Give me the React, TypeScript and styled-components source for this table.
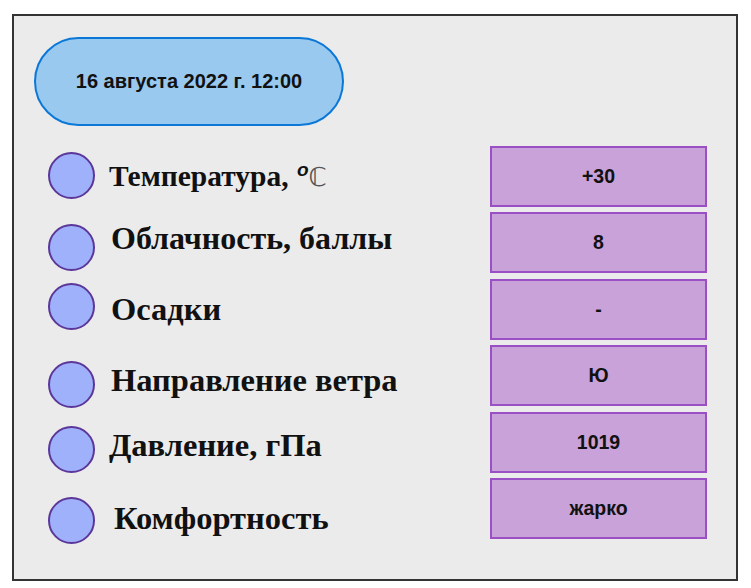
import React from 'react'
import styled, { createGlobalStyle } from 'styled-components'

const GlobalStyle = createGlobalStyle`
    html, body {
        margin: 0;
        padding: 0;
        background: #ffffff;
    }
`

const Page = styled.div`
    width: 751px;
    height: 588px;
    padding: 14px 0 0 12px;
    box-sizing: border-box;
`

const Frame = styled.main`
    width: 726px;
    height: 567px;
    box-sizing: border-box;
    border: 2px solid #333333;
    background-color: #ebebeb;
    padding: 21px 0 0 20px;
    display: flex;
    flex-direction: column;
`

const DatePill = styled.div`
    width: 310px;
    height: 89px;
    box-sizing: border-box;
    border: 2px solid #0b78d8;
    border-radius: 45px;
    background-color: #99c9ef;
    display: flex;
    align-items: center;
    justify-content: center;
    font-family: 'Liberation Sans', Arial, sans-serif;
    font-weight: bold;
    font-size: 20px;
    color: #111111;
`

const Columns = styled.div`
    display: flex;
    justify-content: space-between;
    padding-right: 29px;
`

const LabelList = styled.div`
    display: flex;
    flex-direction: column;
    padding-left: 14px;
`

const Row = styled.div<{ $top: number }>`
    display: flex;
    align-items: center;
    margin-top: ${(p) => p.$top}px;
    height: 47px;
`

const Dot = styled.div`
    width: 47px;
    height: 47px;
    box-sizing: border-box;
    border-radius: 50%;
    border: 2px solid #5b3799;
    background-color: #a0b1fb;
    flex-shrink: 0;
`

const Label = styled.span<{ $indent: number; $shift: number; $size: number }>`
    margin-left: ${(p) => p.$indent}px;
    position: relative;
    top: ${(p) => p.$shift}px;
    font-family: 'Liberation Serif', 'Times New Roman', serif;
    font-weight: bold;
    font-size: ${(p) => p.$size}px;
    color: #111111;
    white-space: nowrap;
`

const Degree = styled.span`
    font-family: 'Liberation Sans', Arial, sans-serif;
    font-style: italic;
    font-size: 19px;
    vertical-align: 10px;
    margin-left: 1px;
`

const Celsius = styled.span`
    font-family: 'DejaVu Sans', sans-serif;
    font-weight: normal;
    font-size: 26px;
    color: #555555;
`

const ValueList = styled.div`
    display: flex;
    flex-direction: column;
    gap: 5.4px;
    padding-top: 20px;
`

const ValueBox = styled.div`
    width: 217px;
    height: 61px;
    box-sizing: border-box;
    border: 2px solid #9a4fc5;
    background-color: #c8a2d8;
    display: flex;
    align-items: center;
    justify-content: center;
    font-family: 'Liberation Sans', Arial, sans-serif;
    font-weight: bold;
    font-size: 19.5px;
    color: #111111;
`

const rows = [
    { key: 'temp', top: 26, indent: 14, shift: 0, size: 29.5, value: '+30' },
    { key: 'cloud', top: 25, indent: 16, shift: -9, size: 32, value: '8' },
    { key: 'rain', top: 12, indent: 16, shift: 3, size: 32.5, value: '-' },
    { key: 'wind', top: 31, indent: 16, shift: -4, size: 32.5, value: 'Ю' },
    { key: 'press', top: 18, indent: 14, shift: -4, size: 32.5, value: '1019' },
    { key: 'comfort', top: 24, indent: 19, shift: -2, size: 32.5, value: 'жарко' },
]

const labels: Record<string, React.ReactNode> = {
    temp: (
        <>
            Температура, <Degree>o</Degree>
            <Celsius>ℂ</Celsius>
        </>
    ),
    cloud: 'Облачность, баллы',
    rain: 'Осадки',
    wind: 'Направление ветра',
    press: 'Давление, гПа',
    comfort: 'Комфортность',
}

const App = (): JSX.Element => {
    return (
        <Page>
            <GlobalStyle />
            <Frame>
                <DatePill>16 августа 2022 г. 12:00</DatePill>
                <Columns>
                    <LabelList>
                        {rows.map((row) => (
                            <Row key={row.key} $top={row.top}>
                                <Dot />
                                <Label $indent={row.indent} $shift={row.shift} $size={row.size}>
                                    {labels[row.key]}
                                </Label>
                            </Row>
                        ))}
                    </LabelList>
                    <ValueList>
                        {rows.map((row) => (
                            <ValueBox key={row.key}>{row.value}</ValueBox>
                        ))}
                    </ValueList>
                </Columns>
            </Frame>
        </Page>
    )
}

export default App
